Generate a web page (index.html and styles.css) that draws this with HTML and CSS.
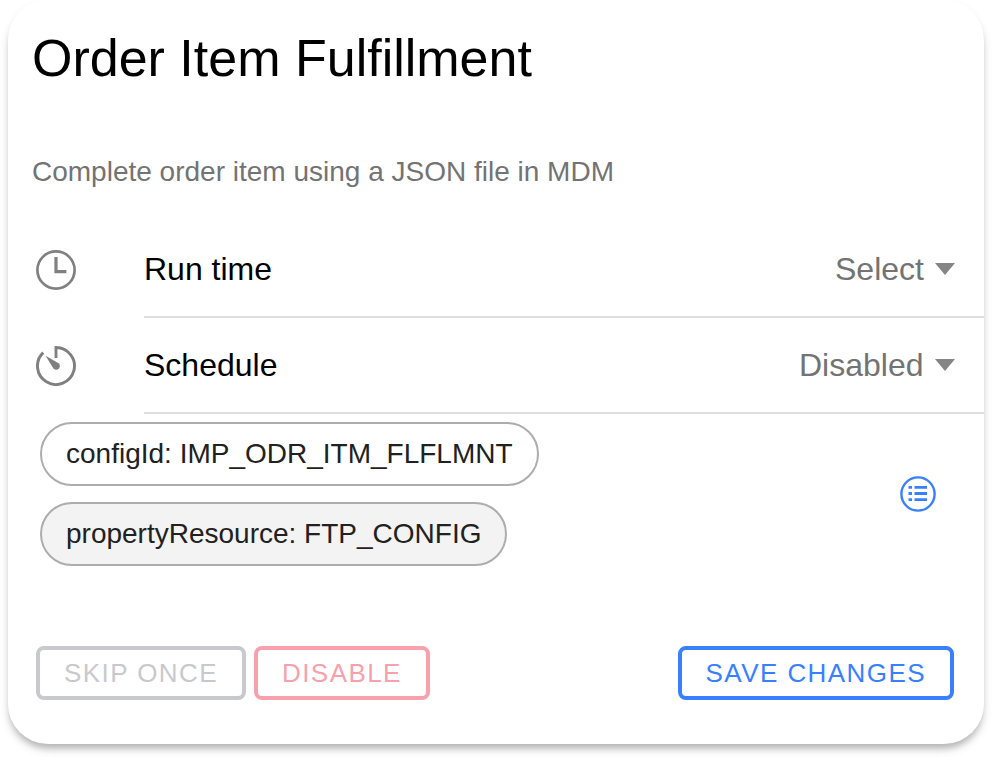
FILE: index.html
```html
<!DOCTYPE html>
<html lang="en">
<head>
<meta charset="utf-8">
<meta name="viewport" content="width=device-width, initial-scale=1">
<title>Order Item Fulfillment</title>
<link rel="stylesheet" href="styles.css">
</head>
<body>
<main class="card">
  <h1 class="title">Order Item Fulfillment</h1>
  <p class="description">Complete order item using a JSON file in MDM</p>

  <div class="row">
    <svg class="row-icon" viewBox="0 0 40 40" aria-hidden="true">
      <circle cx="20" cy="20" r="18.6" fill="none" stroke="currentColor" stroke-width="2.7"/>
      <path d="M20 7v14.6h10.4" fill="none" stroke="currentColor" stroke-width="3.2"/>
    </svg>
    <div class="row-body">
      <label class="row-label" for="runtime">Run time</label>
      <select class="row-select" id="runtime"><option>Select</option></select>
      <svg class="caret" viewBox="0 0 20 12" aria-hidden="true"><path d="M0 0h20L10 12z" fill="currentColor"/></svg>
    </div>
  </div>

  <div class="row">
    <svg class="row-icon" viewBox="0 0 40 40" aria-hidden="true">
      <path d="M7.2 6.6A18.5 18.5 0 1 0 20 1.5V12" fill="none" stroke="currentColor" stroke-width="2.9"/>
      <path d="M9.6 9.8L22.6 17.2a3.7 3.7 0 1 1-5.4 5z" fill="currentColor"/>
    </svg>
    <div class="row-body">
      <label class="row-label" for="schedule">Schedule</label>
      <select class="row-select" id="schedule"><option>Disabled</option></select>
      <svg class="caret" viewBox="0 0 20 12" aria-hidden="true"><path d="M0 0h20L10 12z" fill="currentColor"/></svg>
    </div>
  </div>

  <div class="properties">
    <div class="chips">
      <span class="chip">configId: IMP_ODR_ITM_FLFLMNT</span>
      <span class="chip chip-filled">propertyResource: FTP_CONFIG</span>
    </div>
    <button class="list-button" type="button" aria-label="Edit properties">
      <svg class="list-icon" viewBox="0 0 36 36" aria-hidden="true">
        <circle cx="18" cy="18" r="16.6" fill="none" stroke="currentColor" stroke-width="2.4"/>
        <path d="M8.5 11.3h3.5M14.5 11.3h12.5M8.5 17.5h3.5M14.5 17.5h12.5M8.5 23.7h3.5M14.5 23.7h12.5" fill="none" stroke="currentColor" stroke-width="2.8"/>
      </svg>
    </button>
  </div>

  <div class="actions">
    <button class="button button-muted" type="button">SKIP ONCE</button>
    <button class="button button-danger" type="button">DISABLE</button>
    <button class="button button-primary" type="button">SAVE CHANGES</button>
  </div>
</main>
</body>
</html>
```
FILE: styles.css
```css
* {
  box-sizing: border-box;
}

body {
  margin: 0;
  background: #fff;
  color: #000;
  font-family: "Liberation Sans", Arial, sans-serif;
}

.card {
  margin: 0 8px 16px;
  padding: 28px 0 44px;
  border-radius: 40px;
  background: #fff;
  box-shadow:
    0 6px 6px -2px rgba(0, 0, 0, 0.2),
    0 6px 10px 0 rgba(0, 0, 0, 0.12);
}

.title {
  margin: 0;
  padding: 0 24px;
  font-size: 52px;
  font-weight: 400;
  line-height: 60px;
}

.description {
  margin: 64px 0 30px;
  padding: 0 24px;
  color: #737373;
  font-size: 28px;
  line-height: 40px;
}

.row {
  display: flex;
  align-items: center;
  gap: 68px;
  height: 96px;
  padding-left: 28px;
}

.row-icon {
  flex: none;
  width: 40px;
  height: 40px;
  color: #808080;
}

.row-body {
  display: flex;
  flex: 1;
  align-items: center;
  height: 96px;
  padding-right: 29px;
  border-bottom: 2px solid #dedede;
}

.row-label {
  flex: 1;
  font-size: 32px;
  line-height: 40px;
}

.row-select {
  height: 40px;
  margin: 0 11px 0 0;
  padding: 0;
  border: 0;
  background: transparent;
  color: #737373;
  font-family: inherit;
  font-size: 32px;
  line-height: 40px;
  appearance: none;
}

.caret {
  flex: none;
  width: 20px;
  height: 12px;
  color: #858585;
}

.properties {
  display: flex;
  align-items: center;
  justify-content: space-between;
  padding: 8px 48px 0 32px;
}

.chips {
  display: flex;
  flex-direction: column;
  align-items: flex-start;
  gap: 16px;
}

.chip {
  height: 64px;
  padding: 0 24px;
  border: 2px solid #adadad;
  border-radius: 32px;
  color: #212121;
  font-size: 28px;
  line-height: 60px;
}

.chip-filled {
  background: #f3f3f3;
}

.list-button {
  display: flex;
  padding: 0;
  border: 0;
  background: transparent;
  color: #3880ff;
}

.list-icon {
  width: 36px;
  height: 36px;
}

.actions {
  display: flex;
  gap: 8px;
  padding: 80px 30px 0 28px;
}

.button {
  height: 54px;
  padding: 0 24px;
  border: 4px solid currentColor;
  border-radius: 8px;
  background: transparent;
  font-family: inherit;
  font-size: 26px;
  letter-spacing: 0.055em;
  line-height: 46px;
}

.button-muted {
  color: #c8c9cd;
}

.button-danger {
  color: #f7a1ad;
}

.button-primary {
  margin-left: auto;
  color: #3880ff;
}
```
